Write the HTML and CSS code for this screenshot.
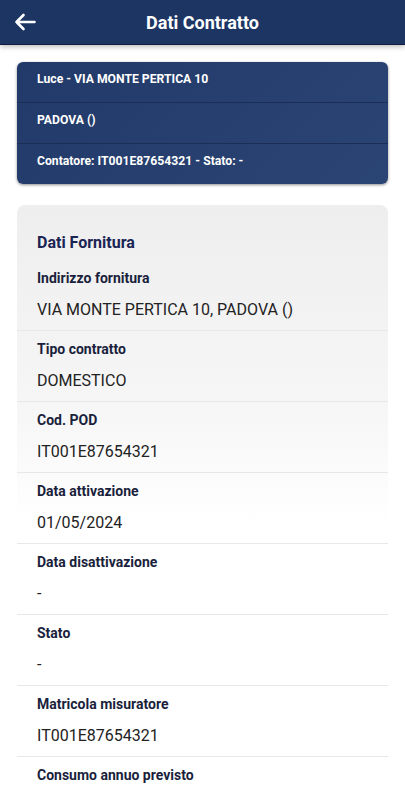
FILE: index.html
```html
<!DOCTYPE html>
<html lang="it">
<head>
  <meta charset="UTF-8" />
  <title>Dati Contratto</title>
  <link rel="stylesheet" href="styles.css">
</head>
<body>
  <header class="appbar">
    <button class="back-btn" aria-label="Indietro">
      <svg width="22" height="18" viewBox="0 0 22 18">
        <path d="M20.5 9H2.5M9.5 2L2.5 9l7 7" fill="none" stroke="#fff" stroke-width="2.6" stroke-linecap="round" stroke-linejoin="round"/>
      </svg>
    </button>
    <h1>Dati Contratto</h1>
  </header>

  <main class="content">
    <div class="summary-card">
      <div class="summary-row">Luce - VIA MONTE PERTICA 10</div>
      <div class="summary-row">PADOVA ()</div>
      <div class="summary-row">Contatore: IT001E87654321 - Stato: -</div>
    </div>

    <section class="detail-card">
      <h2>Dati Fornitura</h2>
      <div class="field">
        <div class="field-label">Indirizzo fornitura</div>
        <div class="field-value">VIA MONTE PERTICA 10, PADOVA ()</div>
      </div>
      <div class="field">
        <div class="field-label">Tipo contratto</div>
        <div class="field-value">DOMESTICO</div>
      </div>
      <div class="field">
        <div class="field-label">Cod. POD</div>
        <div class="field-value">IT001E87654321</div>
      </div>
      <div class="field">
        <div class="field-label">Data attivazione</div>
        <div class="field-value">01/05/2024</div>
      </div>
      <div class="field">
        <div class="field-label">Data disattivazione</div>
        <div class="field-value">-</div>
      </div>
      <div class="field">
        <div class="field-label">Stato</div>
        <div class="field-value">-</div>
      </div>
      <div class="field">
        <div class="field-label">Matricola misuratore</div>
        <div class="field-value">IT001E87654321</div>
      </div>
      <div class="field">
        <div class="field-label">Consumo annuo previsto</div>
        <div class="field-value">1000</div>
      </div>
    </section>
  </main>
</body>
</html>
```

FILE: styles.css
```css
body {
  font-family: Roboto, "Noto Sans", sans-serif;
  margin: 0;
  background: #fff;
  color: #222;
}
.appbar {
  position: relative;
  height: 44px;
  background: #1d3563;
  border-bottom: 1px solid #0e1d3d;
  box-shadow: 0 2px 5px rgba(0,0,0,0.25);
  display: flex;
  align-items: center;
  justify-content: center;
}
.appbar h1 {
  margin: 0;
  color: #fff;
  font-size: 18px;
  font-weight: 700;
}
.back-btn {
  position: absolute;
  left: 14px;
  top: 13px;
  padding: 0;
  border: none;
  background: none;
  line-height: 0;
}
.content {
  padding: 17px 17px 0;
}
.summary-card {
  background: linear-gradient(135deg, #223a69, #2a4474);
  border-radius: 6px;
  box-shadow: 0 1px 3px rgba(0,0,0,0.45);
}
.summary-row {
  padding: 7px 20px 13px;
  line-height: 20px;
  font-size: 12.2px;
  font-weight: 700;
  color: #fff;
  border-bottom: 1px solid #1a2e57;
}
.summary-row:last-child {
  border-bottom: none;
}
.detail-card {
  margin-top: 21px;
  padding-top: 27px;
  border-radius: 8px;
  background: linear-gradient(#eeeeee, #f6f6f6 200px, #ffffff 320px);
}
.detail-card h2 {
  margin: 0 0 6px;
  padding: 0 20px;
  font-size: 16px;
  line-height: 22px;
  color: #1b2453;
}
.field {
  padding: 8px 20px;
  border-bottom: 1px solid #e8e8e8;
}
.field-label {
  font-size: 14px;
  line-height: 20px;
  font-weight: 700;
  color: #1a1f3c;
}
.field-value {
  margin-top: 10px;
  font-size: 16px;
  line-height: 24px;
  color: #222;
}
```
